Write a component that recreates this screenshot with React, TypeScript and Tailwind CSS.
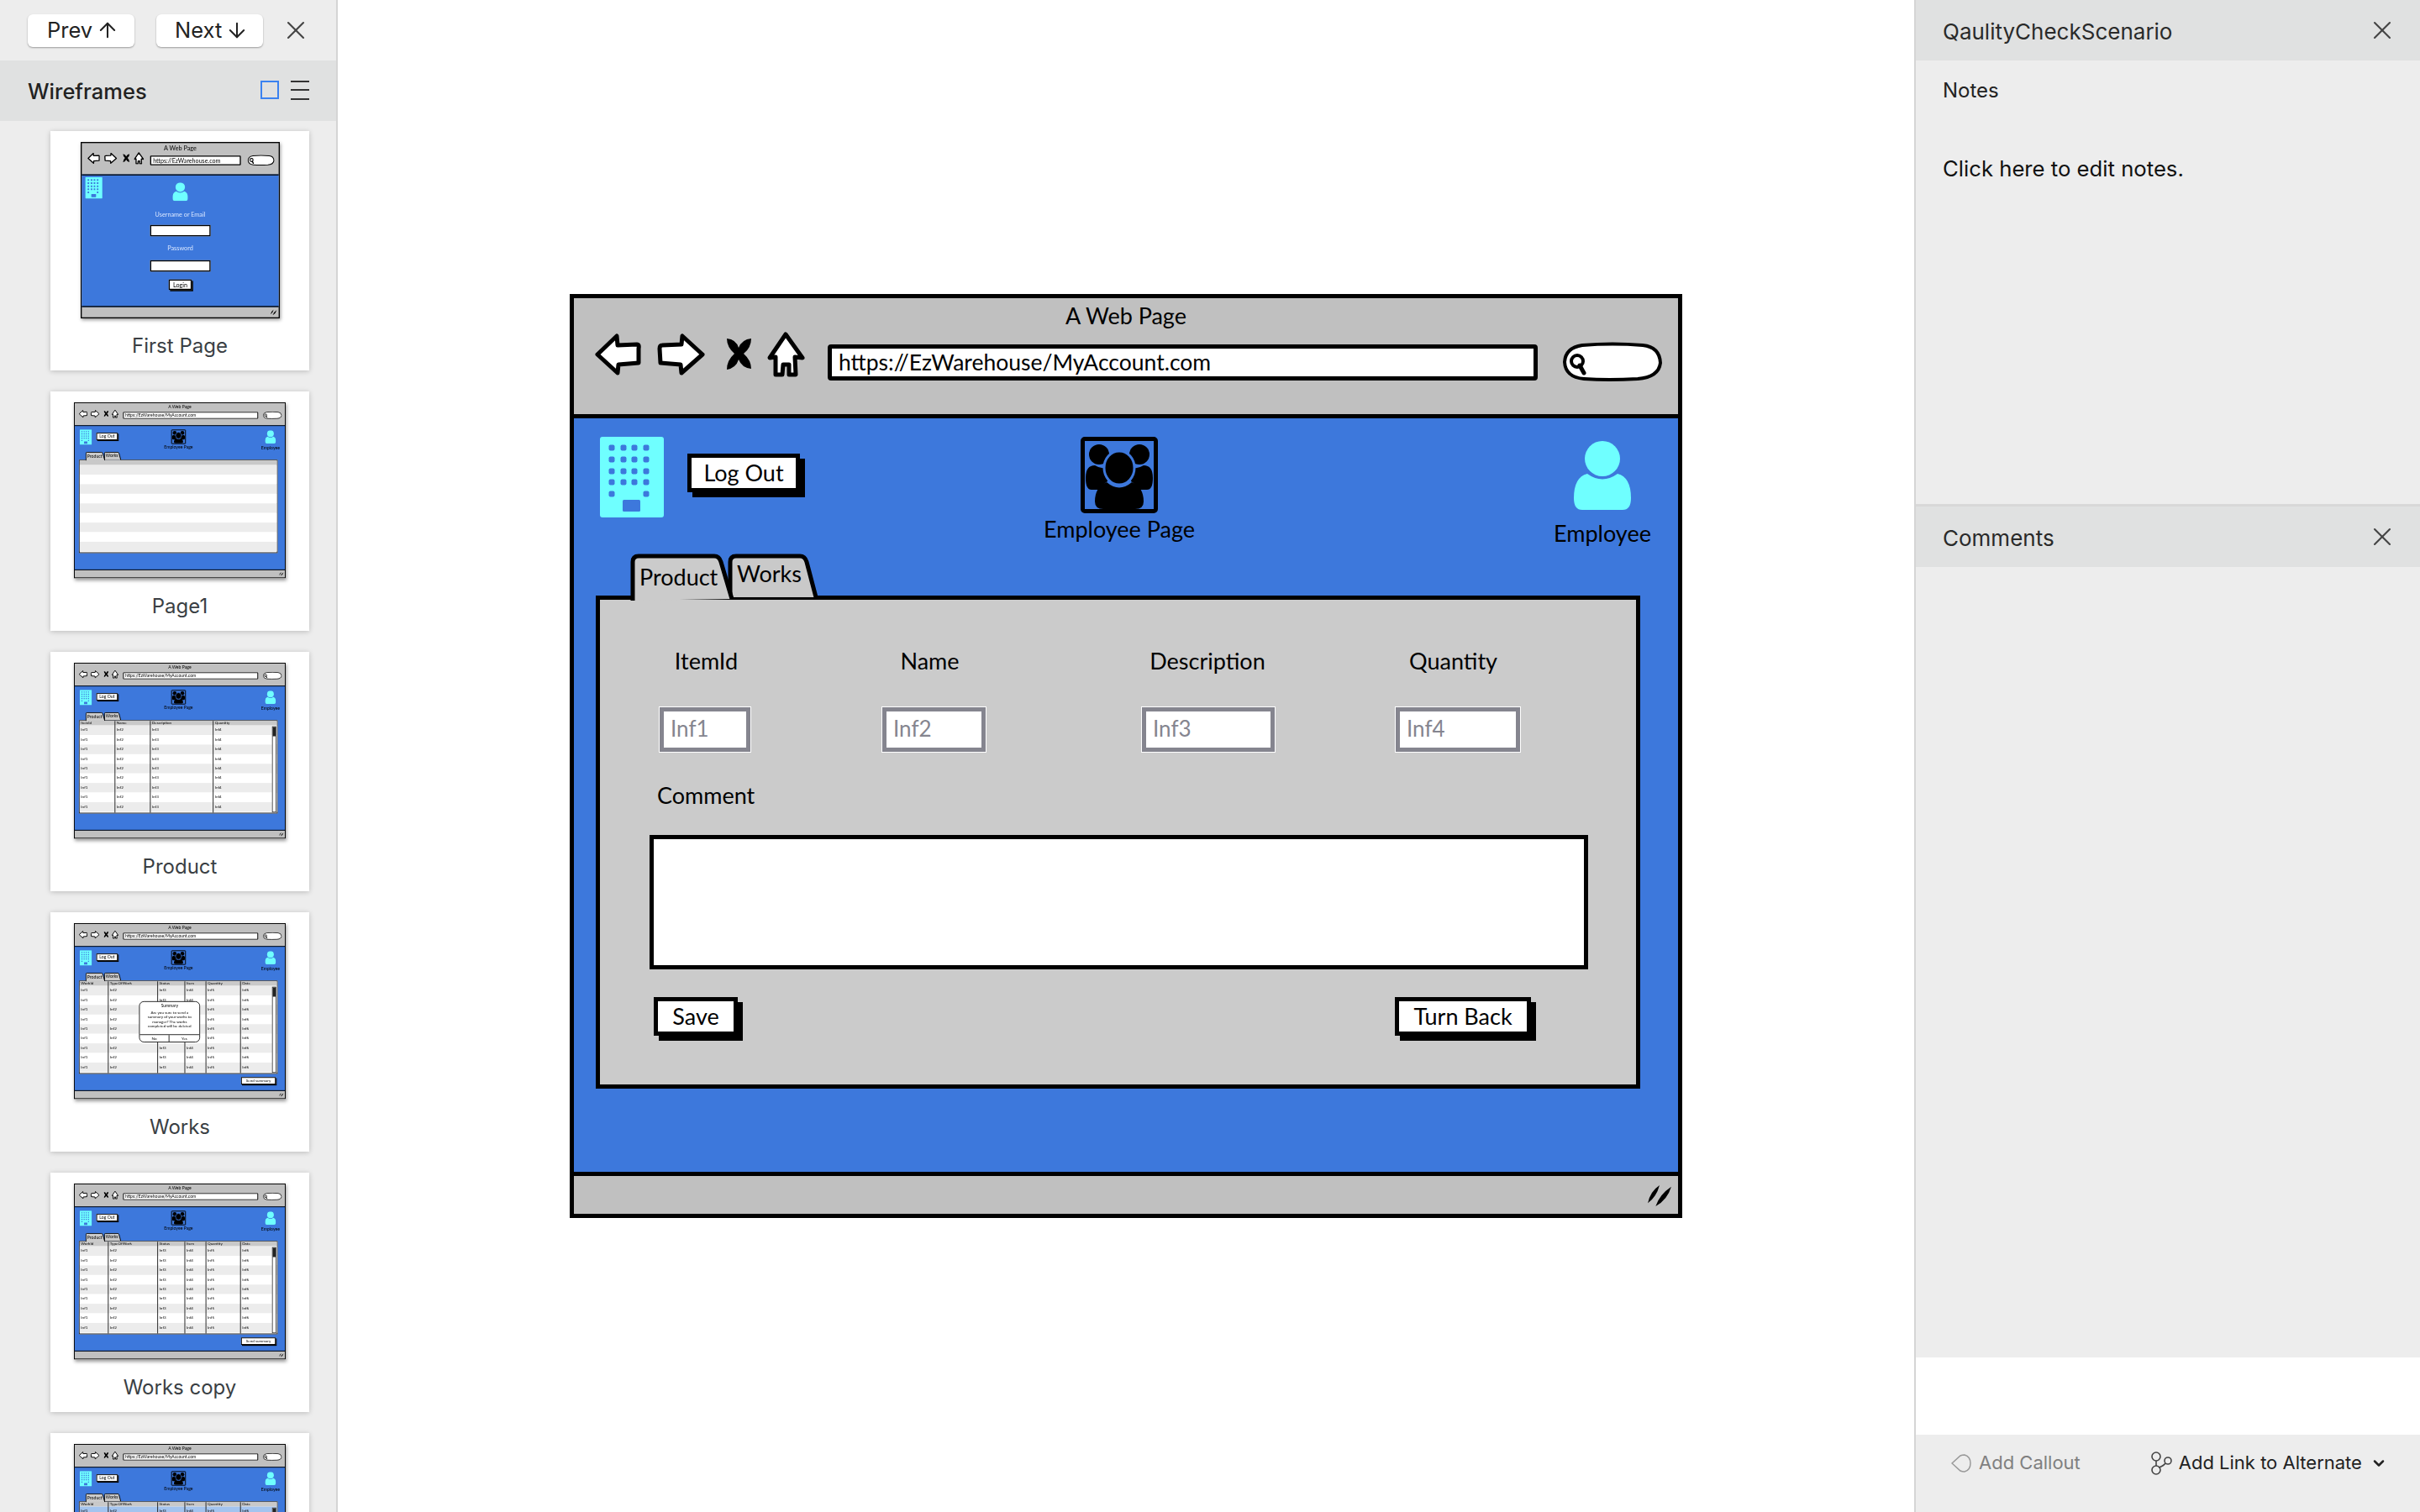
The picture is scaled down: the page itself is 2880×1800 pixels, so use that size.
import React from 'react';
import { ArrowDown, ArrowUp, ChevronDown, X } from 'lucide-react';

const INTER = "font-['Inter','Noto_Sans',sans-serif]";
const SKETCH = "font-['Lato','Noto_Sans',sans-serif]";

// --- wireframe drawings ---

const BackArrow = () => (
  <svg viewBox="0 0 55 50" className="w-[55px] h-[50px] mt-[2px] shrink-0">
    <path d="M3 25 L26 3 L27 14 L50 13 Q53 13 52 18 L52 35 L28 37 L27 47 Z" fill="#fff" stroke="#000" strokeWidth="5" strokeLinejoin="round" />
  </svg>
);

const ForwardArrow = () => (
  <svg viewBox="0 0 57 50" className="w-[57px] h-[50px] mt-[2px] shrink-0">
    <path d="M54 25 L30 3 L29 13 L6 14 Q3 14 3 18 L4 35 L28 37 L29 47 Z" fill="#fff" stroke="#000" strokeWidth="5" strokeLinejoin="round" />
  </svg>
);

const CrossMark = () => (
  <svg viewBox="0 0 31 42" className="w-[31px] h-[42px] mt-[5px] shrink-0">
    <path d="M1 3 Q12 4 15 14 Q19 4 30 3 Q30 14 21 21 Q30 29 30 39 Q19 38 15 28 Q12 38 1 40 Q1 29 10 21 Q1 13 1 3 Z" fill="#000" />
  </svg>
);

const HomeArrow = () => (
  <svg viewBox="0 0 45 54" className="w-[45px] h-[54px] shrink-0">
    <path d="M22 3 L42 31 L33 30 L34 51 L26 51 L26 39 L19 39 L18 51 L10 51 L10 30 L3 31 Z" fill="#fff" stroke="#000" strokeWidth="5" strokeLinejoin="round" />
  </svg>
);

const SearchPill = () => (
  <svg viewBox="0 0 120 48" className="w-[120px] h-[48px] mt-[12px] shrink-0">
    <path d="M24 4 Q60 1 96 4 Q116 6 117 25 Q115 42 90 44 Q55 46 26 44 Q4 42 3 24 Q4 7 24 4 Z" fill="#fff" stroke="#000" strokeWidth="4" />
    <circle cx="18" cy="23" r="7" fill="#fff" stroke="#000" strokeWidth="4" />
    <path d="M21 28 L26 37" stroke="#000" strokeWidth="5" strokeLinecap="round" />
  </svg>
);

const ResizeGrip = () => (
  <svg viewBox="0 0 30 28" className="w-[30px] h-[26px]">
    <path d="M15 1 Q3 9 0 24 Q11 16 15 1 Z M30 3 Q15 13 10 28 Q25 20 30 3 Z" fill="#000" />
  </svg>
);

const BuildingIcon = () => (
  <svg viewBox="0 0 76 96" className="w-[76px] h-[96px] shrink-0">
    <rect width="76" height="96" rx="3" fill="#6fffff" />
    <g fill="#3d78dc">
      {[13, 27, 41, 54, 68].map((y, row) =>
        [14, 28, 41, 55].map((x, col) =>
          row === 4 && (col === 1 || col === 2) ? null : <rect key={`${x}-${y}`} x={x - 3.5} y={y - 3.5} width="7" height="7" rx="2" />
        )
      )}
      <rect x="27" y="75" width="21" height="14" rx="1.5" />
    </g>
  </svg>
);

const PersonIcon = ({ color = '#6fffff' }: { color?: string }) => (
  <svg viewBox="0 0 68 82" className="w-[68px] h-[82px] shrink-0">
    <path d="M16 39 Q34 52 52 39 Q68 43 68 68 Q68 82 58 82 L10 82 Q0 82 0 68 Q0 43 16 39 Z" fill={color} />
    <ellipse cx="34" cy="21" rx="21" ry="21" fill={color} />
  </svg>
);

const GroupIcon = () => (
  <div className="w-[92px] h-[91px] border-[5px] border-black rounded-[5px]">
    <svg viewBox="0 0 82 81" className="w-full h-full">
      <circle cx="17" cy="16" r="12" fill="#000" />
      <circle cx="65" cy="16" r="12" fill="#000" />
      <path d="M1 44 Q1 29 12 29 Q20 34 26 31 L27 48 Q20 52 22 58 L8 58 Q1 58 1 44 Z" fill="#000" />
      <path d="M81 44 Q81 29 70 29 Q62 34 56 31 L55 48 Q62 52 60 58 L74 58 Q81 58 81 44 Z" fill="#000" />
      <ellipse cx="41" cy="32" rx="18" ry="20" fill="#000" stroke="#3d78dc" strokeWidth="3" />
      <path d="M26 49 Q41 62 56 49 Q70 55 70 72 Q70 81 60 81 L22 81 Q12 81 12 72 Q12 55 26 49 Z" fill="#000" />
    </svg>
  </div>
);

const SketchButton = ({ label, widthClass, textClass = 'text-[27px]' }: { label: string; widthClass: string; textClass?: string }) => (
  <div className={`${widthClass} h-[46px] shrink-0 border-[5px] border-black bg-white shadow-[6px_6px_0_#000] flex items-center justify-center text-black ${textClass}`}>
    {label}
  </div>
);

// --- browser frame shared by the big mockup and the thumbnails ---

const BrowserFrame = ({ url, sizeClass, children }: { url: string; sizeClass: string; children: React.ReactNode }) => (
  <div className={`${sizeClass} shrink-0 flex flex-col border-[5px] border-black bg-[#c0c0c0] text-black ${SKETCH}`}>
    <div className="h-[138px] shrink-0 flex flex-col">
      <div className="mt-[6px] text-center text-[27px] leading-[30px]">A Web Page</div>
      <div className="mt-[4px] flex items-start pl-[25px] pr-[18px]">
        <BackArrow />
        <div className="w-[19px] shrink-0" />
        <ForwardArrow />
        <div className="w-[25px] shrink-0" />
        <CrossMark />
        <div className="w-[18px] shrink-0" />
        <HomeArrow />
        <div className="flex-1 min-w-0 h-[43px] mt-[15px] ml-[27px] mr-[29px] border-[5px] border-black rounded-[4px] bg-white pl-[8px] text-[26.5px] leading-[32px] whitespace-nowrap">
          {url}
        </div>
        <SearchPill />
      </div>
    </div>
    <div className="flex-1 min-h-0 relative bg-[#3d78dc] border-y-[5px] border-black">{children}</div>
    <div className="h-[45px] shrink-0 flex items-center justify-end pr-[7px]">
      <ResizeGrip />
    </div>
  </div>
);

const PageHeader = () => (
  <div>
    <div className="h-[161px] flex items-start pt-[22px]">
      <div className="ml-[31px]">
        <BuildingIcon />
      </div>
      <div className="ml-[28px] mt-[20px]">
        <SketchButton label="Log Out" widthClass="w-[134px]" />
      </div>
      <div className="ml-[285px] w-[190px] flex flex-col items-center">
        <GroupIcon />
        <div className="mt-[4px] text-[27px] leading-[30px] whitespace-nowrap">Employee Page</div>
      </div>
      <div className="ml-[420px] w-[120px] flex flex-col items-center pt-[5px]">
        <PersonIcon />
        <div className="mt-[13px] text-[27px] leading-[30px] whitespace-nowrap">Employee</div>
      </div>
    </div>
    <div className="h-[50px] flex items-start ml-[67px]">
      <div className="relative z-10 w-[124px] h-[56px] shrink-0 pl-[11px] pt-[13px] text-[27px] leading-[30px]">
        <svg viewBox="0 0 124 56" className="absolute inset-0 w-full h-full">
          <path d="M3 56 L3 10 Q3 3 10 3 L100 3 Q106 3 108 10 L121 54" fill="#cbcbcb" stroke="#000" strokeWidth="5" />
        </svg>
        <span className="relative">Product</span>
      </div>
      <div className="relative -ml-[8px] w-[108px] h-[52px] shrink-0 pl-[11px] pt-[9px] text-[27px] leading-[30px]">
        <svg viewBox="0 0 108 52" className="absolute inset-0 w-full h-full">
          <path d="M3 52 L3 10 Q3 3 10 3 L86 3 Q92 3 94 10 L105 52" fill="#c9c9c9" stroke="#000" strokeWidth="5" />
        </svg>
        <span className="relative">Works</span>
      </div>
    </div>
  </div>
);

const Field = ({ label, value, widthClass, marginClass, labelClass = '' }: { label: string; value: string; widthClass: string; marginClass: string; labelClass?: string }) => (
  <div className={`${marginClass} ${widthClass} shrink-0 flex flex-col items-center`}>
    <div className={`text-[27px] leading-[30px] whitespace-nowrap ${labelClass}`}>{label}</div>
    <div className="mt-[40px] w-full h-[53px] border-[5px] border-[#85858f] outline outline-white bg-white pl-[8px] text-[26px] leading-[40px] text-[#85858f]">{value}</div>
  </div>
);

const ProductForm = () => (
  <div className="ml-[26px] w-[1243px] h-[587px] border-[5px] border-black bg-[#cbcbcb] pt-[58px]">
    <div className="flex items-start">
      <Field label="ItemId" value="Inf1" widthClass="w-[108px]" marginClass="ml-[71px]" labelClass="pl-[3px]" />
      <Field label="Name" value="Inf2" widthClass="w-[123px]" marginClass="ml-[157px]" labelClass="pr-[10px]" />
      <Field label="Description" value="Inf3" widthClass="w-[158px]" marginClass="ml-[186px]" labelClass="pr-[2px]" />
      <Field label="Quantity" value="Inf4" widthClass="w-[148px]" marginClass="ml-[144px]" labelClass="pr-[11px]" />
    </div>
    <div className="mt-[37px] ml-[68px] text-[27px] leading-[30px]">Comment</div>
    <div className="mt-[32px] ml-[59px] w-[1117px] h-[160px] border-[5px] border-black bg-white" />
    <div className="mt-[33px] ml-[64px] w-[1044px] flex justify-between">
      <SketchButton label="Save" widthClass="w-[100px]" />
      <SketchButton label="Turn Back" widthClass="w-[162px]" />
    </div>
  </div>
);

// --- thumbnail contents ---

const PRODUCT_COLS = [
  { title: 'ItemId', value: 'Inf1', width: 'w-[223px]' },
  { title: 'Name', value: 'Inf2', width: 'w-[221px]' },
  { title: 'Description', value: 'Inf3', width: 'w-[393px]' },
  { title: 'Quantity', value: 'Inf4', width: 'flex-1' },
];

const WORK_COLS = [
  { title: 'WorkId', value: 'Inf1', width: 'w-[181px]' },
  { title: 'TypeOfWork', value: 'Inf2', width: 'w-[309px]' },
  { title: 'Status', value: 'Inf3', width: 'w-[170px]' },
  { title: 'Item', value: 'Inf4', width: 'w-[132px]' },
  { title: 'Quantity', value: 'Inf5', width: 'w-[216px]' },
  { title: 'Date', value: 'Inf6', width: 'flex-1' },
];

const ALL_ROWS = [0, 1, 2, 3, 4, 5, 6, 7, 8];

const DataTable = ({ cols, highlight, rows = ALL_ROWS }: { cols: typeof WORK_COLS; highlight?: boolean; rows?: number[] }) => (
  <div className="ml-[26px] w-[1243px] h-[584px] border-[5px] border-[#222] bg-white flex flex-col relative">
    <div className="h-[28px] shrink-0 bg-[#c9c9c9]" />
    {rows.map((row) => (
      <div
        key={row}
        className={`h-[60px] shrink-0 ${row === 0 && highlight ? 'bg-[#a3c4ef]' : row % 2 === 0 ? 'bg-[#ececec]' : 'bg-white'}`}
      />
    ))}
    <div className="absolute inset-0 flex">
      {cols.map((col, index) => (
        <div key={col.title} className={`${col.width} h-full ${index < cols.length - 1 ? 'border-r-[5px] border-[#222]' : ''} pl-[8px] text-[24px]`}>
          <div className="h-[28px] leading-[26px]">{col.title}</div>
          {rows.map((row) => (
            <div key={row} className="h-[60px] leading-[52px]">
              {col.value}
            </div>
          ))}
        </div>
      ))}
    </div>
    <div className="absolute right-[4px] top-[34px] bottom-[2px] w-[26px] border-[4px] border-[#222] bg-white flex flex-col items-center">
      <div className="w-full h-[58px] bg-[#222]" />
    </div>
  </div>
);

const EmptyTable = () => (
  <div className="ml-[26px] w-[1243px] h-[584px] border-[5px] border-[#222] bg-white flex flex-col">
    <div className="h-[28px] shrink-0 bg-[#c9c9c9]" />
    {ALL_ROWS.map((row) => (
      <div key={row} className={`h-[60px] shrink-0 ${row % 2 === 0 ? 'bg-[#ececec]' : 'bg-white'}`} />
    ))}
  </div>
);

const SendSummary = () => (
  <div className="mt-[20px] ml-[1040px]">
    <SketchButton label="Send summary" widthClass="w-[217px]" textClass="text-[24px]" />
  </div>
);

const SummaryDialog = () => (
  <div className="absolute left-[402px] top-[340px] w-[382px] h-[258px] border-[5px] border-[#222] rounded-[30px] bg-white flex flex-col text-center text-[24px] leading-[27px]">
    <div className="mt-[12px] text-[26px]">Summary</div>
    <div className="mt-[14px] flex-1 px-[28px]">Are you sure to send a summary of your works to manager? The works completed will be deleted</div>
    <div className="h-[46px] flex border-t-[5px] border-[#222]">
      <div className="w-[185px] border-r-[5px] border-[#222] leading-[38px]">No</div>
      <div className="flex-1 leading-[38px]">Yes</div>
    </div>
  </div>
);

const LoginBody = () => (
  <div className="h-full flex flex-col items-center pt-[31px] relative">
    <div className="absolute left-[15px] top-[7px]">
      <BuildingIcon />
    </div>
    <PersonIcon />
    <div className="mt-[45px] text-[27px] leading-[30px] text-[#d8e6ff]">Username or Email</div>
    <div className="mt-[31px] w-[267px] h-[50px] border-[5px] border-black bg-white" />
    <div className="mt-[37px] text-[27px] leading-[30px] text-[#d8e6ff]">Password</div>
    <div className="mt-[39px] w-[267px] h-[50px] border-[5px] border-black bg-white" />
    <div className="mt-[35px]">
      <SketchButton label="Login" widthClass="w-[102px]" />
    </div>
  </div>
);

const MY_ACCOUNT = 'https://EzWarehouse/MyAccount.com';

const THUMBS: { name: string; first?: boolean; body?: React.ReactNode; hideName?: boolean }[] = [
  { name: 'First Page', first: true },
  { name: 'Page1', body: <EmptyTable /> },
  { name: 'Product', body: <DataTable cols={PRODUCT_COLS} /> },
  {
    name: 'Works',
    body: (
      <>
        <DataTable cols={WORK_COLS} />
        <SendSummary />
        <SummaryDialog />
      </>
    ),
  },
  {
    name: 'Works copy',
    body: (
      <>
        <DataTable cols={WORK_COLS} />
        <SendSummary />
      </>
    ),
  },
  // only its top edge is on screen, the rest falls below the window
  {
    name: 'Works selected',
    hideName: true,
    body: <DataTable cols={WORK_COLS} highlight rows={[0]} />,
  },
];

const ThumbCard = ({ name, first, body, hideName }: { name: string; first?: boolean; body?: React.ReactNode; hideName?: boolean }) => (
  <div className="w-[308px] h-[285px] shrink-0 bg-white shadow-[0_1px_6px_rgba(0,0,0,0.22)] flex flex-col items-center pt-[13px]">
    <div className={`${first ? 'w-[237px]' : 'w-[252px]'} h-[210px] shrink-0 shadow-[1px_2px_4px_rgba(0,0,0,0.4)] blur-[0.35px]`}>
      {first ? (
        <div className="w-0 h-0 scale-[0.2693] origin-top-left">
          <BrowserFrame url="https://EzWarehouse.com" sizeClass="w-[880px] h-[780px]">
            <LoginBody />
          </BrowserFrame>
        </div>
      ) : (
        <div className="w-0 h-0 scale-[0.1903] origin-top-left">
          <BrowserFrame url={MY_ACCOUNT} sizeClass="w-[1324px] h-[1100px]">
            <PageHeader />
            {body}
          </BrowserFrame>
        </div>
      )}
    </div>
    {!hideName && <div className="mt-[18px] text-[24px] leading-[30px] text-[#3a3f44]">{name}</div>}
  </div>
);

const Sidebar = () => (
  <aside className="w-[402px] shrink-0 h-full bg-[#ededed] border-r-[2px] border-[#d5d5d5] flex flex-col overflow-hidden">
    <div className="h-[72px] shrink-0 flex items-center pl-[33px]">
      <button className="w-[127px] h-[39px] bg-white rounded-[6px] shadow-[0_1px_2px_rgba(0,0,0,0.35)] flex items-center pl-[23px] gap-[4px] text-[25.5px] text-[#222]">
        Prev <ArrowUp size={28} strokeWidth={1.75} />
      </button>
      <button className="ml-[26px] w-[127px] h-[39px] bg-white rounded-[6px] shadow-[0_1px_2px_rgba(0,0,0,0.35)] flex items-center pl-[22px] gap-[4px] text-[25.5px] text-[#222]">
        Next <ArrowDown size={28} strokeWidth={1.75} />
      </button>
      <X size={36} strokeWidth={1.4} className="ml-[21px] text-[#444]" />
    </div>
    <div className="h-[72px] shrink-0 bg-[#e0e1e1] flex items-center pl-[33px] pr-[32px]">
      <span className="flex-1 text-[25.5px] font-medium text-[#222] pt-[2px]">Wireframes</span>
      <div className="w-[22px] h-[22px] border-[2px] border-[#3b82f0] -mt-[2px]" />
      <div className="ml-[14px] w-[22px] h-[23px] flex flex-col justify-between -mt-[2px]">
        <div className="h-[2px] bg-[#333]" />
        <div className="h-[2px] bg-[#333]" />
        <div className="h-[2px] bg-[#333]" />
      </div>
    </div>
    <div className="flex flex-col gap-[25px] pt-[12px] pl-[60px]">
      {THUMBS.map((thumb) => (
        <ThumbCard key={thumb.name} {...thumb} />
      ))}
    </div>
  </aside>
);

const Mockup = () => (
  <main className="flex-1 min-w-0 h-full bg-white flex justify-center items-start pt-[350px]">
    <BrowserFrame url={MY_ACCOUNT} sizeClass="w-[1324px] h-[1100px]">
      <PageHeader />
      <ProductForm />
    </BrowserFrame>
  </main>
);

const PanelHeader = ({ title }: { title: string }) => (
  <div className="h-[72px] shrink-0 bg-[#e0e1e1] flex items-center pl-[32px] pr-[27px]">
    <span className="flex-1 text-[26px] text-[#2a2a2a] pt-[2px]">{title}</span>
    <X size={36} strokeWidth={1.4} className="text-[#444]" />
  </div>
);

const RightPanel = () => (
  <aside className="w-[602px] shrink-0 h-full border-l-[2px] border-[#d5d5d5] bg-[#ededed] flex flex-col">
    <PanelHeader title="QaulityCheckScenario" />
    <div className="h-[531px] shrink-0 pl-[32px] pt-[21px] border-b-[3px] border-[#d8d8d8]">
      <div className="text-[24px] leading-[30px] text-[#222]">Notes</div>
      <div className="mt-[62px] text-[25.7px] leading-[32px] text-[#111]">Click here to edit notes.</div>
    </div>
    <PanelHeader title="Comments" />
    <div className="flex-1 min-h-0" />
    <div className="h-[92px] shrink-0 bg-white" />
    <div className="h-[92px] shrink-0 flex items-start pt-[17px] pl-[42px] text-[22px]">
      <div className="flex items-center gap-[9px] text-[#808080]">
        <svg viewBox="0 0 24 24" className="w-[24px] h-[24px]">
          <path d="M1 12 L11 3 Q13 2 16 2 Q23 4 23 12 Q23 20 16 22 Q13 22 11 21 Z" fill="none" stroke="#999" strokeWidth="1.5" />
        </svg>
        Add Callout
      </div>
      <div className="ml-[83px] flex items-center gap-[8px] text-[#222]">
        <svg viewBox="0 0 26 28" className="w-[26px] h-[28px]" fill="none" stroke="#444" strokeWidth="1.6">
          <circle cx="7" cy="6" r="5" />
          <circle cx="7" cy="22" r="5" />
          <circle cx="21" cy="11" r="4" />
          <path d="M7 11 L7 17 M10 19 Q16 17 18 14" />
        </svg>
        Add Link to Alternate
        <ChevronDown size={20} strokeWidth={3} className="ml-[2px]" />
      </div>
    </div>
  </aside>
);

const App: React.FC = () => {
  return (
    <div className={`w-[2880px] h-[1800px] flex overflow-hidden bg-white ${INTER}`}>
      <Sidebar />
      <Mockup />
      <RightPanel />
    </div>
  );
};

export default App;
